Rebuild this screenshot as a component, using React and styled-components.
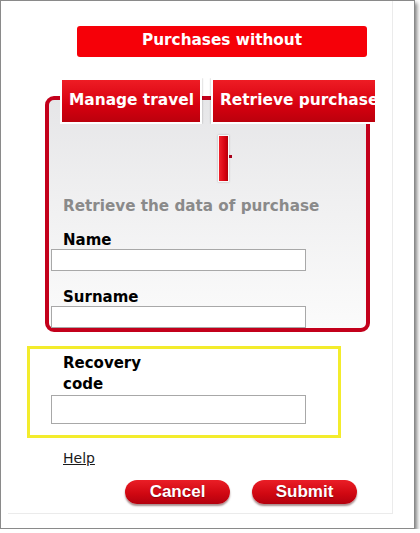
import React from 'react';
import styled, { createGlobalStyle } from 'styled-components';

const GlobalStyle = createGlobalStyle`
  html, body {
    margin: 0;
    padding: 0;
    background: #fff;
  }
  body {
    font-family: 'DejaVu Sans', Verdana, sans-serif;
  }
`;

const Frame = styled.div`
  width: 415px;
  height: 529px;
  box-sizing: border-box;
  border: 1px solid #8a8a8a;
  background: #fff;
  box-shadow: 2px 3px 4px rgba(0, 0, 0, 0.5);
`;

const Sheet = styled.div`
  margin-left: 7px;
  width: 385px;
  height: 513px;
  box-sizing: border-box;
  border-right: 1px solid #ebebeb;
  border-bottom: 1px solid #ebebeb;
  display: flex;
  flex-direction: column;
  align-items: flex-start;
`;

const TitleBar = styled.div`
  margin: 25px 0 0 69px;
  width: 290px;
  height: 31px;
  box-sizing: border-box;
  padding-bottom: 2px;
  border-radius: 3px;
  background: #f60008;
  color: #fff;
  font-weight: 700;
  font-size: 15.3px;
  line-height: 29px;
  text-align: center;
`;

const TabRow = styled.div`
  position: relative;
  z-index: 2;
  margin: 21px 0 -28px 52px;
  width: 315px;
  height: 46px;
  display: flex;
  gap: 9px;
  overflow: hidden;
`;

const Tab = styled.div`
  flex: none;
  height: 46px;
  box-sizing: border-box;
  border: 2px solid #fff;
  padding: 0 6px 2px 7px;
  background: linear-gradient(180deg, #ee1c24 0%, #d6000f 60%, #bb000c 100%);
  box-shadow: 0 0 2px rgba(0, 0, 0, 0.3);
  color: #fff;
  font-weight: 700;
  font-size: 15.4px;
  line-height: 40px;
  white-space: nowrap;
`;

const Panel = styled.div`
  margin-left: 37px;
  width: 325px;
  height: 236px;
  box-sizing: border-box;
  border: 4px solid #c3001b;
  border-radius: 9px;
  background: linear-gradient(180deg, #e6e6e8 0%, #f0f0f1 45%, #fbfbfb 100%);
  display: flex;
  flex-direction: column;
  align-items: flex-start;
`;

const FragmentRow = styled.div`
  margin: 35px 0 0 169px;
  display: flex;
  align-items: center;
`;

const Fragment = styled.div`
  width: 11px;
  height: 47px;
  box-sizing: border-box;
  border: 1px solid #fafafa;
  background: linear-gradient(90deg, #f0202a 0%, #d4000e 70%, #b0000a 100%);
  box-shadow: 0 0 2px rgba(0, 0, 0, 0.25);
`;

const Nub = styled.div`
  width: 3px;
  height: 3px;
  margin-bottom: 4px;
  background: #a8001a;
`;

const Heading = styled.div`
  margin: 14px 0 0 14px;
  color: #8a8a8a;
  font-weight: 700;
  font-size: 15.2px;
  line-height: 20px;
`;

const Label = styled.div`
  margin: ${(p) => p.$top}px 0 0 ${(p) => p.$left}px;
  max-width: ${(p) => (p.$narrow ? '100px' : 'none')};
  color: #000;
  font-weight: 700;
  font-size: 15px;
  line-height: ${(p) => (p.$narrow ? 21 : 18)}px;
`;

const Field = styled.input`
  display: block;
  margin: ${(p) => p.$top || 0}px 0 0 ${(p) => p.$left}px;
  width: 255px;
  height: 29px;
  box-sizing: border-box;
  border: 1px solid #a8a8a8;
  background: #fff;
  padding: 0 4px;
  outline: none;
`;

const CodeBox = styled.div`
  margin: 14px 0 0 19px;
  width: 314px;
  height: 92px;
  box-sizing: border-box;
  border: 3px solid #f3ec2c;
`;

const HelpLink = styled.a`
  margin: 10px 0 0 55px;
  color: #1a1a1a;
  font-size: 14px;
  line-height: 20px;
  text-decoration: underline;
  cursor: pointer;
`;

const ButtonRow = styled.div`
  margin: 12px 0 0 117px;
  display: flex;
  gap: 22px;
`;

const PillButton = styled.button`
  width: 105px;
  height: 24px;
  padding: 0;
  border: none;
  border-radius: 12px;
  background: linear-gradient(180deg, #ea1e26 0%, #d10812 55%, #b3000e 100%);
  box-shadow: 0 2px 2px rgba(60, 0, 0, 0.45);
  color: #fff;
  font-family: 'Liberation Sans', Arial, sans-serif;
  font-weight: 700;
  font-size: 17px;
  line-height: 24px;
  text-shadow: 0 1px 1px rgba(0, 0, 0, 0.3);
  cursor: pointer;
`;

export default function App() {
  return (
    <>
      <GlobalStyle />
      <Frame>
        <Sheet>
          <TitleBar>Purchases without</TitleBar>
          <TabRow>
            <Tab>Manage travel</Tab>
            <Tab>Retrieve purchase</Tab>
          </TabRow>
          <Panel>
            <FragmentRow>
              <Fragment />
              <Nub />
            </FragmentRow>
            <Heading>Retrieve the data of purchase</Heading>
            <Label $top={15} $left={14}>Name</Label>
            <Field $left={2} />
            <Label $top={17} $left={14}>Surname</Label>
            <Field $left={2} />
          </Panel>
          <CodeBox>
            <Label $top={4} $left={33} $narrow>
              Recovery code
            </Label>
            <Field $left={21} />
          </CodeBox>
          <HelpLink>Help</HelpLink>
          <ButtonRow>
            <PillButton>Cancel</PillButton>
            <PillButton>Submit</PillButton>
          </ButtonRow>
        </Sheet>
      </Frame>
    </>
  );
}
